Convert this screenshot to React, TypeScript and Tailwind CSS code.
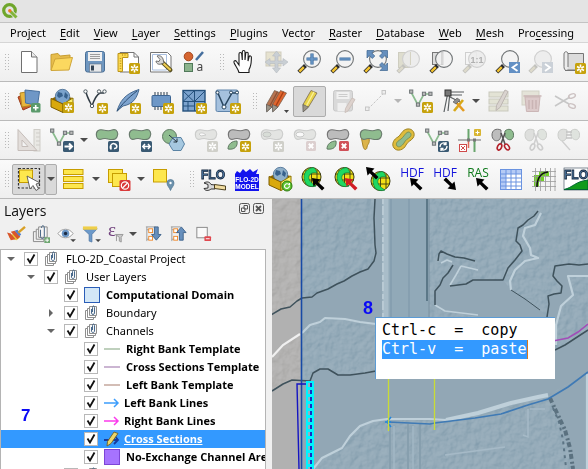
import React from "react";

type Kids = { children?: React.ReactNode };

function Svg({ children, size = 24 }: Kids & { size?: number }) {
  return (
    <svg width={size} height={size} viewBox="0 0 24 24" fill="none" className="block shrink-0 overflow-visible" aria-hidden="true">
      {children}
    </svg>
  );
}

/* ---------- shared icon parts ---------- */

function Star({ x = 13, y = 13, dim = false }: { x?: number; y?: number; dim?: boolean }) {
  return (
    <g transform={`translate(${x} ${y})`}>
      <rect width="11" height="11" rx="1.5" fill={dim ? "#cfcfc9" : "#c6a20c"} />
      <path d="M5.5 1.5v8M2 3.5l7 4M9 3.5l-7 4" stroke="#fff" strokeWidth="1.6" />
      <circle cx="5.5" cy="5.5" r="1.1" fill={dim ? "#cfcfc9" : "#c6a20c"} />
    </g>
  );
}

function Cross({ x = 13, y = 13, dim = false }: { x?: number; y?: number; dim?: boolean }) {
  return (
    <g transform={`translate(${x} ${y})`}>
      <rect width="10" height="10" rx="1.5" fill={dim ? "#dccfcf" : "#d05058"} />
      <path d="M2.8 2.8l4.4 4.4M7.2 2.8L2.8 7.2" stroke="#fff" strokeWidth="2" />
    </g>
  );
}

function NavyBadge({ children }: Kids) {
  return (
    <g transform="translate(13 13)">
      <rect width="11" height="11" rx="1.5" fill="#3a5a73" />
      <g stroke="#fff" strokeWidth="1.5" fill="none">{children}</g>
    </g>
  );
}

function Lens({ dim = false, handle = "#f4c430", children }: Kids & { dim?: boolean; handle?: string }) {
  return (
    <>
      <path d="M7.5 15.5L.8 22.2" stroke={dim ? "#c2c2be" : "#2b2b2b"} strokeWidth="4" />
      <path d="M5.8 17.2L1.4 21.6" stroke={dim ? "#dddacb" : handle} strokeWidth="2.4" />
      <circle cx="14" cy="9" r="8.4" fill={dim ? "#ececec" : "#f3f3f3"} fillOpacity=".88" stroke={dim ? "#cfcfcf" : "#707476"} strokeWidth="1.1" />
      {children}
    </>
  );
}

const BLOB = "M1.5 8C.5 3 4 1 8 2c4 1 6 1.500 9 0 5-1.500 7 3 5 7-1.500 3-5 3-9 2-3-1-4-.5-6 0-3 1-5 0-5.500-3z";

function Blob({ fill = "#8fbc8f", stroke = "#687a6c" }: { fill?: string; stroke?: string }) {
  return <path d={BLOB} fill={fill} stroke={stroke} strokeWidth="1.1" />;
}

function Vee({ line = "#333f49", node = "#fff" }: { line?: string; node?: string }) {
  return (
    <>
      <path d="M2 3l7 13 6-11h7" stroke={line} strokeWidth="1.7" />
      <g fill={node} stroke="#6f7577" strokeWidth="1">
        <rect x=".6" y="1" width="3.200" height="3.200" />
        <rect x="7.400" y="14" width="3.200" height="3.200" />
        <rect x="13.400" y="3.200" width="3.200" height="3.200" />
        <rect x="19.800" y="3.200" width="3.200" height="3.200" />
      </g>
    </>
  );
}

function Pencil({ body, dark, dx = 0 }: { body: string; dark: string; dx?: number }) {
  return (
    <g transform={`translate(${dx} 0)`}>
      <path d="M14 1.500l6 2.500-8.500 14-5 4.500-.5-7z" fill={body} stroke="#6b5a4a" strokeWidth=".7" />
      <path d="M17 2.800L9 17.500" stroke={dark} strokeWidth="1.300" />
      <path d="M6 15.500l5.500 2.500-5.500 5z" fill="#9b9488" stroke="#555" strokeWidth=".6" />
    </g>
  );
}

function Scissors({ dim = false }: { dim?: boolean }) {
  const c = dim ? "#cdcdcd" : "#b3202a";
  return (
    <>
      <path d="M10 5l4 11M14 5l-4 11" stroke={dim ? "#cfcfcf" : "#555"} strokeWidth="1.600" />
      <ellipse cx="8.500" cy="19" rx="2" ry="3.200" transform="rotate(25 8.500 19)" stroke={c} strokeWidth="1.600" />
      <ellipse cx="16" cy="19" rx="2" ry="3.200" transform="rotate(-35 16 19)" stroke={c} strokeWidth="1.600" />
    </>
  );
}

function Halves({ dim = false }: { dim?: boolean }) {
  return (
    <>
      <path d="M10 2C5 0 1 2 1 7s4 7 7 5c2-1 2-7 2-10z" fill={dim ? "#dedfdd" : "#bdbdbd"} stroke={dim ? "#cccecb" : "#6e6e6e"} />
      <path d="M14 3c3-3 8-2 8.500 3s-3 7-6 5-3-5-2.500-8z" fill={dim ? "#dfe3de" : "#8fbc8f"} stroke={dim ? "#cccecb" : "#5f7a62"} />
    </>
  );
}

function Globe({ x = 0, y = 0 }: { x?: number; y?: number }) {
  return (
    <g transform={`translate(${x} ${y})`}>
      <circle cx="10.500" cy="10" r="9.500" fill="#f2e016" stroke="#3a3a10" strokeWidth="1" />
      <path d="M5 3v14M10.500 1v18M16 3v14M1 7h19M1 13h19" stroke="#3a3a10" strokeWidth=".9" />
      <path d="M12 .5C3 2 1 10 5 17c3 3 7 3 10 2-5-3-8-6-7-10 1-3 5-4 8-3-1-3-2-5-4-5.500z" fill="#1fd862" stroke="#107a36" strokeWidth=".7" />
    </g>
  );
}

function Arrow({ fill = "#000", x = 10, y = 10, turn = 0 }: { fill?: string; x?: number; y?: number; turn?: number }) {
  return (
    <path
      transform={`translate(${x} ${y}) rotate(${turn} 6 6)`}
      d="M0 0l8.500 1.500-2.500 2.500 6.500 6-2.500 2.500-6.200-6.300-2.300 2.300z"
      fill={fill}
    />
  );
}

function OpenBox({ globeFill = "#7ba3cc" }: { globeFill?: string }) {
  return (
    <>
      <path d="M1 10l8-4 14 3-10 5z" fill="#8a6500" />
      <circle cx="12.500" cy="7.500" r="7.200" fill={globeFill} stroke="#456a8f" strokeWidth=".8" />
      <path d="M8 3l4 1 1 3-4 2-2-2zM15 3l3 3-1 4-3-2z" fill="#37618c" />
      <path d="M1 9.500l12 5.500v8.500L1 18z" fill="#d9a90d" stroke="#7c5c00" />
      <path d="M13 15l10-6v9l-10 5.500z" fill="#fbee6c" stroke="#8f7400" />
    </>
  );
}

function FloText() {
  return (
    <text
      x="11"
      y="12"
      textAnchor="middle"
      fill="#4f7ba6"
      stroke="#14253c"
      strokeWidth=".8"
      fontFamily="Liberation Sans, sans-serif"
      fontWeight="700"
      fontSize="12"
    >
      FLO
    </text>
  );
}

function Tag({ text, color, turn = 0 }: { text: string; color: string; turn?: number }) {
  return (
    <Svg>
      <text x="12" y="9.500" textAnchor="middle" fill={color} fontSize="12" fontFamily="Open Sans, sans-serif">{text}</text>
      <Arrow x={turn ? 11 : 10} y={11} turn={turn} />
    </Svg>
  );
}

/* ---------- icons ---------- */

const icons: Record<string, React.ReactNode> = {
  newDoc: <Svg><path d="M4.500 1.500h10l5.500 5.500v15.500H4.500z" fill="#fff" stroke="#707070" /><path d="M14.500 1.500V7H20" fill="#e9e9e9" stroke="#707070" /></Svg>,
  open: <Svg><path d="M1 20V4.500L8 3.500l2 2.500 10-1v4" fill="#e7bd4c" stroke="#c79d31" /><path d="M1 20.500L5 9l17.500-1.500L19 20z" fill="#fbd85f" stroke="#cfa539" /></Svg>,
  save: <Svg><rect x="2.500" y="1.500" width="19" height="20.500" rx="2" fill="#6f97c0" stroke="#4a6f96" /><rect x="5" y="2" width="14" height="9" fill="#f0f0f0" /><path d="M7 4.500h10M7 6.500h10M7 8.500h10" stroke="#888" strokeWidth=".8" /><rect x="6.500" y="14" width="12" height="8" fill="#e6e8ea" stroke="#5a6f85" strokeWidth=".6" /><rect x="8" y="15.500" width="3" height="5" fill="#345" /></Svg>,
  layout: <Svg><path d="M4 2.500h14l4.500 4.500v15H4z" fill="#fff" stroke="#757575" /><path d="M18 2.500V7h4.500" stroke="#757575" /><path d="M2 3.500h10v4H6.500v14H2z" fill="#fcd94f" stroke="#bb941a" /><path d="M4.500 8v12M6 5h5" stroke="#c09a22" strokeDasharray="1 1.500" strokeWidth="1.500" /><Star /></Svg>,
  layoutMgr: <Svg><path d="M1.500 2.500h17L22 6v16H1.500z" fill="#fff" stroke="#757575" /><path d="M3.500 4.500h14v15.500h-14z" stroke="#a9bfe0" /><path d="M13 12l8.500 8" stroke="#59501e" strokeWidth="4" strokeLinecap="round" /><path d="M14 13l7 6.500" stroke="#eccb51" strokeWidth="2.200" strokeLinecap="round" /><path d="M8 6c2-1 5 0 6 3l1 4-3 1c-3 1-5-1-5-3l3 .500 1-2z" fill="#d8d8d8" stroke="#555" strokeWidth=".8" /></Svg>,
  style: <Svg><circle cx="6.500" cy="6.500" r="4.300" fill="#d56530" stroke="#a4431a" /><path d="M14 10l7-8" stroke="#456f9e" strokeWidth="2.500" /><rect x="2.500" y="13.500" width="8" height="8" fill="#8bb38c" stroke="#50795a" /><text x="14.500" y="21" fontSize="12" fill="#444" fontFamily="Noto Sans, sans-serif">a</text></Svg>,
  hand: <Svg><path d="M7 22.500c-1-4-4-7-5-10-.5-2 1.500-2.500 2.500-1L7 15V4c0-2 2.500-2 2.700 0l.6 6V2c0-2 2.700-2 2.700 0v8l.7-6.500c.2-1.800 2.600-1.600 2.500.3L16 11l1-4c.5-1.700 2.500-1.300 2.400.5-.2 5 .1 8-2.400 12v3z" fill="#fff" stroke="#1c1c1c" strokeWidth="1.100" /></Svg>,
  panSel: <Svg><rect x="1" y="2" width="15" height="14" fill="#e6e2cf" stroke="#cfccbd" /><path d="M11.500 1l4 5h-2.500v5h5V8.500l5 3.500-5 4v-2.500h-5V18h2.500l-4 5-4-5H10v-4.500H5V16l-5-4 5-3.500V11h5V6H7.500z" fill="#c9cfd4" stroke="#b5bbc0" strokeWidth=".6" /></Svg>,
  zoomIn: <Svg><Lens><path d="M14 3.500v11M8.500 9h11" stroke="#3b6a9c" strokeWidth="3.200" /><path d="M14 4v10M9 9h10" stroke="#6c99c8" strokeWidth="1.600" /></Lens></Svg>,
  zoomOut: <Svg><Lens><path d="M8.500 9h11" stroke="#3b6a9c" strokeWidth="3" /><path d="M9 9h10" stroke="#6c99c8" strokeWidth="1.400" /></Lens></Svg>,
  zoomFull: <Svg><Lens /><g fill="#668fbd" stroke="#3b648f" strokeWidth=".7"><path d="M3 .5h7L7.800 3l3 3-2.500 2.500-3-3L3 8z" /><path d="M23.500 .5v7.500L21 5.500l-3 3L15.500 6l3-3-2-2.500z" /><path d="M23.500 20.500h-7.500l2.500-2.500-3-3 2.500-2.500 3 3 2.500-2.500z" /></g></Svg>,
  zoomSel: <Svg><rect x="1.500" y="2.500" width="11" height="15" fill="#deddce" stroke="#cecdc0" /><Lens dim /><path d="M13.500 2v13" stroke="#d5d3c3" /></Svg>,
  zoomLayer: <Svg><rect x="2.500" y="2.500" width="11" height="12" fill="#ddd" stroke="#777" /><Lens /><path d="M12 2v13" stroke="#bbb" /></Svg>,
  zoom1: <Svg><rect x="2.500" y="2.500" width="11" height="12" stroke="#cfcfcf" /><Lens dim /><text x="14" y="12.500" fontSize="9" fontWeight="700" textAnchor="middle" fill="#b0b0b0" fontFamily="Liberation Sans, sans-serif">1:1</text></Svg>,
  zoomPrev: <Svg><Lens /><rect x="13" y="12" width="11" height="11" fill="#6390c4" /><path d="M21.500 14l-5 3.500 5 3.500" stroke="#fff" strokeWidth="1.800" /></Svg>,
  zoomNext: <Svg><Lens dim /><rect x="13" y="12" width="11" height="11" fill="#cbd1d8" /><path d="M16 14l5 3.500-5 3.500" stroke="#fff" strokeWidth="1.800" /></Svg>,
  newMap: <Svg><path d="M6 3.500h15.500V20H5" fill="#dcdcdc" stroke="#767676" /><path d="M5 20.500c-2.500 0-3-2-3-4V4c0-3 4-3 4 0v13" fill="#ececec" stroke="#767676" /><path d="M3 20.500h17" stroke="#767676" /><Star /></Svg>,

  dataSource: <Svg><path d="M1 8l9-4 5 13-9 4z" fill="#cf5a2d" stroke="#9c3d18" /><path d="M3 4l12-2 2 14-12 2z" fill="#e9b63d" stroke="#b78720" /><path d="M8 1l14.500 1.500-2 14L8.500 14z" fill="#6f97c6" stroke="#47709f" /><rect x="14" y="14" width="9.500" height="9.500" rx="1.500" fill="#5a9a6b" /><path d="M18.700 16v5.500M16 18.700h5.500" stroke="#fff" strokeWidth="1.600" /></Svg>,
  geopackage: <Svg><OpenBox /><Star /></Svg>,
  shapefile: <Svg><path d="M3 3c1 5 3 8 6 14 2-6 4-11 8-13h4" stroke="#303b44" strokeWidth="1.500" /><g fill="#fff" stroke="#4d5960"><circle cx="2.500" cy="2.500" r="1.700" /><circle cx="9" cy="17" r="1.700" /><circle cx="16" cy="2.500" r="1.700" /><circle cx="21.500" cy="2.500" r="1.700" /></g><Star x={14} y={14} /></Svg>,
  feather: <Svg><path d="M1 22c3-9 7-17 22-21.500C21 8 18 15 7 17z" fill="#7ea4cf" stroke="#44688f" /><path d="M1 22.500C6 15 12 9 21 2" stroke="#2d4e72" /><Star x={14} y={14} /></Svg>,
  chip: <Svg><path d="M6 3v4M9 3v4M12 3v4M15 3v4M18 3v4M6 17v4M9 17v4M12 17v4" stroke="#4c5a68" strokeWidth="1.200" /><rect x="3" y="6.500" width="18.500" height="11" rx="1" fill="#6d97c7" stroke="#3c6491" /><Star x={14} y={14} /></Svg>,
  meshLayer: <Svg><rect x="1" y="1.500" width="22" height="20.500" fill="#7ca3ce" stroke="#24507c" strokeWidth="1.400" /><path d="M12.500 1.500V22M1 12.500h22M1 2l11 10.500M12.500 12.500L23 2M12 2L1 12.500M1 17h11.500M6 12.500V22" stroke="#24507c" strokeWidth="1" /><Star x={14} y={14} /></Svg>,
  virtual: <Svg><rect x="1" y="1" width="22" height="21.500" rx="1.500" fill="#a5c1de" stroke="#5e84ab" /><path d="M2 2l7 16L17 4h6" stroke="#27455f" strokeWidth="1.500" /><g fill="#fff" stroke="#27455f"><circle cx="2.500" cy="3.500" r="1.500" /><circle cx="9" cy="18" r="2" /><circle cx="16" cy="3.500" r="1.500" /><circle cx="22" cy="3.500" r="1.500" /></g><Star x={15} y={14} /></Svg>,
  pencils: <Svg><Pencil body="#b77552" dark="#8d5034" dx={-4.500} /><Pencil body="#e0662f" dark="#a63f15" dx={1.500} /><path d="M19 21h5l-2.500 3z" fill="#444" /></Svg>,
  pencil: <Svg><Pencil body="#e7d24a" dark="#fbf19a" dx={-1} /></Svg>,
  saveEdits: <Svg><rect x="2.500" y="1.500" width="19" height="20.500" rx="2" fill="#d9d9d9" stroke="#c8c8c8" /><rect x="5.500" y="3" width="13" height="7" fill="#f1f1f1" /><path d="M7.500 5.500h9M7.500 7.500h9" stroke="#ccc" /><rect x="6.500" y="14" width="9" height="8" fill="#efefef" /><path d="M21 9l3 1.500L17 22l-3 1.500.5-4z" fill="#ddd2cd" stroke="#ccc1bc" /></Svg>,
  digitize: <Svg><path d="M4 20L20 4" stroke="#c5c5c5" strokeDasharray="2.500 1.500" /><rect x="1.500" y="18" width="3.500" height="3.500" fill="#eee" stroke="#c5c5c5" /><rect x="18" y="1.500" width="3.500" height="3.500" fill="#eee" stroke="#c5c5c5" /></Svg>,
  addLine: <Svg><Vee line="#8abc8e" node="#bbb" /><Star x={13} y={13} /></Svg>,
  vertex: <Svg><path d="M6 3l-4 20M8 3L6 22M4 3h18M4 6h16M8 8l10 5" stroke="#5a5f61" strokeWidth="1.200" /><rect x="3" y="1" width="6" height="6" fill="#777" stroke="#333" /><path d="M12 22L21 11" stroke="#d7a818" strokeWidth="2.600" /><path d="M13 12l9 10" stroke="#e49b20" strokeWidth="2.600" /><path d="M11 13l4-4 3 2-4 4z" fill="#8c8c8c" stroke="#555" strokeWidth=".6" /></Svg>,
  multiEdit: <Svg><g fill="#e3e3d5" stroke="#c9c9bd"><rect x="2" y="3" width="19" height="5" /><rect x="2" y="10" width="19" height="5" /><rect x="2" y="17" width="19" height="5" /></g><path d="M18 1l3 1.500-8 16-4 3 .500-5z" fill="#d9d3cf" stroke="#bdb6b2" /></Svg>,
  del: <Svg><rect x="2" y="2" width="17" height="14" fill="#e4e3d8" stroke="#d2d1c5" /><path d="M5 8h15l-1.500 14.500h-12z" fill="#dccaca" stroke="#cbb6b6" /><path d="M3.500 7h18M9 11v9M12.500 11v9M16 11v9" stroke="#c9b4b4" strokeWidth="1.500" /></Svg>,
  cut: <Svg><path d="M2 7l14 8M2 17L17 8" stroke="#c7c7c7" strokeWidth="1.600" /><ellipse cx="19" cy="7" rx="3.500" ry="2" transform="rotate(-20 19 7)" stroke="#ccc2c2" strokeWidth="1.400" /><ellipse cx="19" cy="17" rx="3.500" ry="2" transform="rotate(20 19 17)" stroke="#ccc2c2" strokeWidth="1.400" /></Svg>,

  setsquare: <Svg><rect x="17" y="1.500" width="6" height="21.500" fill="#e9e8e4" stroke="#cfcdc8" /><path d="M19 5h4M19 9h4M19 13h4M19 17h4" stroke="#cfcdc8" /><path d="M1 1.500v21h19zM5 12v6.500h6z" fill="#e3dedb" fillRule="evenodd" stroke="#c5bdb9" /></Svg>,
  moveFeature: <Svg><Vee line="#8abc8e" node="#bbb" /><NavyBadge><path d="M1.500 5.500H9M6 2.500l3 3-3 3" strokeWidth="2" /></NavyBadge></Svg>,
  rotate: <Svg><Blob /><NavyBadge><path d="M3 8.500C1 5 4 1.500 7 3s2 5-1 4.500M3 8.500V5" /></NavyBadge></Svg>,
  scale: <Svg><Blob /><NavyBadge><path d="M2 5.500h7M4 3L1.800 5.500 4 8M7 3l2.200 2.500L7 8" /></NavyBadge></Svg>,
  simplify: <Svg><circle cx="8.500" cy="8.500" r="7" fill="#8fbc8f" stroke="#5f7a62" /><path d="M12 9.500h8l3.500 6.500-3.500 6.500h-8L8 16z" fill="#a6c8e0" stroke="#5a83a4" /><path d="M8 7l8 7M16 10.500V14h-3.500" stroke="#24343f" /></Svg>,
  ringDim: <Svg><Blob fill="#e3e4e2" stroke="#cbcccb" /><path d="M5 6c2-2 5-1 7 1l-5 1z" fill="#fafafa" stroke="#cbcccb" /><Star dim /></Svg>,
  addPart: <Svg><Blob fill="#bcbcbc" stroke="#757575" /><path d="M1 21c0-5 4-8 9-8 1 6-3 9-9 8z" fill="#8fbc8f" stroke="#5f7a62" /><Star /></Svg>,
  fillRing: <Svg><Blob fill="#e3e4e2" stroke="#cbcccb" /><ellipse cx="7" cy="6.500" rx="4" ry="2.500" fill="#d8ddd7" stroke="#c3c5c3" /><Star dim /></Svg>,
  delRing: <Svg><Blob fill="#e3e4e2" stroke="#cbcccb" /><ellipse cx="7" cy="6.500" rx="4" ry="2.500" fill="#fafafa" stroke="#c8c9c8" /><Cross dim /></Svg>,
  delPart: <Svg><Blob fill="#bcbcbc" stroke="#757575" /><path d="M1 21c0-5 4-8 9-8 1 6-3 9-9 8z" fill="#8fbc8f" stroke="#5f7a62" /><Cross /></Svg>,
  reshape: <Svg><path d="M2 8l2 10c1 5 4 4 4 1 1-4 3-3 2-9z" fill="#dcb44a" stroke="#a88427" /><Blob /></Svg>,
  offset: <Svg><path d="M2 20c-3-4 0-9 4-11 3-2 4-7 9-8 6-1 9 5 6 9-2 3-5 3-7 7-2 5-9 7-12 3z" fill="#dfbc3c" stroke="#9f8322" /><path d="M5 18c-2-3 1-5 4-7s4-6 7-7c3 0 4 3 2 5s-5 3-6 6c-2 3-5 5-7 3z" fill="#8fbc8f" stroke="#7d9457" /></Svg>,
  reverse: <Svg><Vee line="#8abc8e" node="#bbb" /><NavyBadge><path d="M2 6c0-4 4-5 6-3M8 1v2.500H5.500M9 5c0 4-4 5-6 3M3 10V7.500h2.500" strokeWidth="1.300" /></NavyBadge></Svg>,
  trim: <Svg><path d="M0 12h23" stroke="#9a9a9a" strokeWidth="1.500" /><path d="M10.500 1v11M16.500 12v12" stroke="#69a56d" strokeWidth="2" /><path d="M10.500 12v8" stroke="#df6a58" strokeWidth="1.500" /><rect x="9" y="10.500" width="3" height="3" fill="#777" /><rect x="15" y="10.500" width="3" height="3" fill="#777" /><rect x="16" y="1" width="7" height="7" rx="1" fill="#d8b532" /><path d="M19.500 2.500v4M17.500 4.500h4" stroke="#fff" /><rect x="1.500" y="16.500" width="7" height="7" fill="#fff" stroke="#d04a4a" /><path d="M3 18l4 4M7 18l-4 4" stroke="#d04a4a" /></Svg>,
  split: <Svg><Halves /><Scissors /></Svg>,
  splitDim: <Svg><Halves dim /><Scissors dim /></Svg>,
  mergeDim: <Svg><Halves dim /><path d="M9 4h6M9 7h6M9 10h6" stroke="#c4c4c4" strokeWidth="1.500" /><path d="M5 13l8 9" stroke="#cfcfcf" strokeWidth="1.300" /></Svg>,

  select: <Svg><path d="M1.500 1.500h21v19.500h-21z" stroke="#333" strokeDasharray="2.500 1.500" strokeWidth="1.200" /><rect x="2.500" y="3" width="13" height="12.500" fill="#fde74d" stroke="#c79d00" /><path d="M10 9l3 13 3-3.500 3 5 2.500-1.500-2.500-5 4-1z" fill="#fff" stroke="#555" strokeWidth=".9" /></Svg>,
  selectForm: <Svg><g fill="#fde74d" stroke="#c79d00"><rect x="1.500" y="2.500" width="19.500" height="5" /><rect x="1.500" y="9.500" width="19.500" height="5" /><rect x="1.500" y="16.500" width="19.500" height="5" /></g></Svg>,
  deselect: <Svg><g fill="#fde74d" stroke="#c79d00"><rect x="1.500" y="2.500" width="14" height="13" /><rect x="5.500" y="6.500" width="14" height="13" /></g><rect x="12.500" y="13" width="11" height="11" rx="1.500" fill="#d93a3a" /><circle cx="18" cy="18.500" r="3.700" stroke="#fff" strokeWidth="1.200" /><path d="M15.500 21l5-5" stroke="#fff" strokeWidth="1.200" /></Svg>,
  selectLoc: <Svg><rect x="1.500" y="2.500" width="13" height="12.500" fill="#fde74d" stroke="#c79d00" /><path d="M18.500 23.500c-1-3-3.500-4.500-3.500-7.500a3.500 3.500 0 017 0c0 3-2.500 4.500-3.500 7.500z" fill="#6c92ad" stroke="#4d7491" strokeWidth=".7" /><circle cx="18.500" cy="16" r="1.200" fill="#fff" /></Svg>,
  floTools: <Svg><FloText /><path d="M2 16c3-2 6-1 7 1.500l4 .5v4l-4 0c-2 2-6 2-7-.5l4-.5v-3.500z" fill="#d8d8d8" stroke="#222" strokeWidth=".9" /><path d="M12.500 17.500l11 1.500v4l-11-1.500z" fill="#f0dca0" stroke="#3b3010" strokeWidth=".9" /></Svg>,
  floModel: <Svg><path d="M0 7l2-3 3 2 3-4 3 3 4-3 3 3 5-3-2 5 3 0v17H0z" fill="#1212ee" /><g fontFamily="Liberation Sans, sans-serif" fontWeight="700" fill="#fff" fontSize="6.500" textAnchor="middle"><text x="12" y="15">FLO-2D</text><text x="12" y="22">MODEL</text></g></Svg>,
  floBox: <Svg><OpenBox globeFill="#8fb0c9" /><circle cx="19" cy="19" r="5" fill="#5fc331" stroke="#2c7a10" /><path d="M16.500 20c0-4 4-4 5-1.500M21.500 18v-2M21.500 19c-.5 3-4 3-5 1" stroke="#fff" strokeWidth="1.100" /></Svg>,
  globeBlack: <Svg><Globe /><Arrow x={11} y={11} /></Svg>,
  globeRed: <Svg><Globe /><Arrow x={11} y={11} fill="#d01c24" /></Svg>,
  globeOut: <Svg><Globe x={3} y={4} /><Arrow x={-1} y={0} /></Svg>,
  hdfIn: <Tag text="HDF" color="#1414dc" />,
  hdfOut: <Tag text="HDF" color="#1414dc" turn={180} />,
  ras: <Tag text="RAS" color="#0f7a1c" />,
  grid: <Svg><rect x="1.500" y="2.500" width="21" height="20" fill="#fff" stroke="#6a93e0" /><rect x="2" y="3" width="20" height="4" fill="#b5cbf5" /><rect x="2" y="3" width="5" height="19" fill="#b5cbf5" /><path d="M7 2v20M12 2v20M17 2v20M2 7h20M2 11h20M2 15h20M2 19h20" stroke="#6a93e0" /></Svg>,
  curve: <Svg><path d="M2 8h5V4h10v5h-5v5H7v6H2z" fill="#72cf28" /><path d="M3.500 1v23M8.500 1v23M13.500 1v23M18.500 1v23M23 1v23M0 4.500h24M0 9.500h24M0 14.500h24M0 19.500h24" stroke="#9a9a9a" strokeWidth=".8" /><path d="M5 20C5 11 8 6 16 5" stroke="#111" strokeWidth="1.600" /></Svg>,
  floHill: <Svg><rect x="-1" y="1" width="24" height="22" fill="#fff" stroke="#345" strokeWidth=".6" /><FloText /><path d="M-1 22.500c9-2 11-8 24-9.500v9.500z" fill="#109a1c" stroke="#063" /></Svg>,
};

/* ---------- toolbars ---------- */

type Item =
  | { kind: "icon"; id: string; label: string; on?: boolean }
  | { kind: "drop"; label: string; dim?: boolean; on?: boolean }
  | { kind: "grip" };

const i = (id: string, label: string, on = false): Item => ({ kind: "icon", id, label, on });
const d = (label: string, dim = false, on = false): Item => ({ kind: "drop", label, dim, on });
const grip: Item = { kind: "grip" };

const toolbars: Item[][] = [
  [
    i("newDoc", "New Project"), i("open", "Open Project"), i("save", "Save Project"), i("layout", "New Print Layout"),
    i("layoutMgr", "Layout Manager"), i("style", "Style Manager"), grip, i("hand", "Pan Map"), i("panSel", "Pan to Selection"),
    i("zoomIn", "Zoom In"), i("zoomOut", "Zoom Out"), i("zoomFull", "Zoom Full"), i("zoomSel", "Zoom to Selection"),
    i("zoomLayer", "Zoom to Layer"), i("zoom1", "Zoom to Native Resolution"), i("zoomPrev", "Zoom Last"),
    i("zoomNext", "Zoom Next"), i("newMap", "New Map View"),
  ],
  [
    i("dataSource", "Data Source Manager"), i("geopackage", "New GeoPackage Layer"), i("shapefile", "New Shapefile Layer"),
    i("feather", "New SpatiaLite Layer"), i("chip", "New Scratch Layer"), i("meshLayer", "New Mesh Layer"),
    i("virtual", "New Virtual Layer"), grip, i("pencils", "Current Edits"), i("pencil", "Toggle Editing", true),
    i("saveEdits", "Save Layer Edits"), i("digitize", "Digitize with Segment"), d("Digitize options", true),
    i("addLine", "Add Line Feature"), i("vertex", "Vertex Tool"), d("Vertex options"), i("multiEdit", "Modify Attributes"),
    i("del", "Delete Selected"), i("cut", "Cut Features"),
  ],
  [
    i("setsquare", "Advanced Digitizing"), i("moveFeature", "Move Feature"), d("Move options"), i("rotate", "Rotate Feature"),
    i("scale", "Scale Feature"), i("simplify", "Simplify Feature"), i("ringDim", "Add Ring"), i("addPart", "Add Part"),
    i("fillRing", "Fill Ring"), i("delRing", "Delete Ring"), i("delPart", "Delete Part"), i("reshape", "Reshape Features"),
    i("offset", "Offset Curve"), i("reverse", "Reverse Line"), i("trim", "Trim or Extend"), i("split", "Split Features"),
    i("splitDim", "Split Parts"), i("mergeDim", "Merge Features"),
  ],
  [
    i("select", "Select Features", true), d("Select options", false, true), i("selectForm", "Select by Value"), d("Value options"),
    i("deselect", "Deselect Features"), d("Deselect options"), i("selectLoc", "Select by Location"), grip,
    i("floTools", "FLO-2D Settings"), i("floModel", "Run FLO-2D Model"), i("floBox", "FLO-2D GeoPackage"),
    i("globeBlack", "Import GDS"), i("globeRed", "Import Components"), i("globeOut", "Export GDS"), i("hdfIn", "Import HDF5"),
    i("hdfOut", "Export HDF5"), i("ras", "Import RAS"), i("grid", "Grid Info"), i("curve", "Rating Curve"), i("floHill", "FLO-2D Profile"),
  ],
];

function Dots() {
  return (
    <svg width="5" height="17" aria-hidden="true">
      {[0, 3, 6, 9, 12, 15].map((y) => (
        <g key={y} fill="#b9b9b9">
          <rect x="0" y={y} width="1" height="1" />
          <rect x="3" y={y} width="1" height="1" />
        </g>
      ))}
    </svg>
  );
}

function Toolbar({ items }: { items: Item[] }) {
  return (
    <div role="toolbar" className="flex h-[39px] items-center overflow-hidden border-b border-[#bababa] bg-linear-to-b from-[#fafafa] to-[#efefef]">
      <div className="flex w-3 shrink-0 justify-end pr-[2px]"><Dots /></div>
      {items.map((it, n) => {
        if (it.kind === "grip") return <div key={n} className="flex w-[17px] shrink-0 justify-end pr-[2px]"><Dots /></div>;
        const on = "rounded-xs border border-[#adadad] bg-[#d9d9d9]";
        if (it.kind === "drop")
          return (
            <button key={n} type="button" aria-label={it.label} className={`flex h-[31px] w-3 shrink-0 items-center justify-center ${it.on ? on : ""}`}>
              <svg width="8" height="4" viewBox="0 0 8 4" className="shrink-0"><path d="M0 0h8L4 4z" fill={it.dim ? "#b5b5b5" : "#4c4c4c"} /></svg>
            </button>
          );
        return (
          <button key={n} type="button" aria-label={it.label} title={it.label} className={`flex h-[31px] w-[33px] shrink-0 items-center justify-center ${it.on ? on : ""}`}>
            {icons[it.id]}
          </button>
        );
      })}
    </div>
  );
}

/* ---------- menu ---------- */

const menus: [string, string, string][] = [
  ["Pro", "j", "ect"], ["", "E", "dit"], ["", "V", "iew"], ["", "L", "ayer"], ["", "S", "ettings"], ["", "P", "lugins"],
  ["Vect", "o", "r"], ["", "R", "aster"], ["", "D", "atabase"], ["", "W", "eb"], ["", "M", "esh"], ["Pro", "c", "essing"],
];

/* ---------- layer tree ---------- */

type Sym = "group" | "domain" | "purple" | "pencil" | "line" | "arrow";
type Layer = { name: string; depth: number; sym: Sym; color?: string; open?: boolean; bold?: boolean; active?: boolean };

const layers: Layer[] = [
  { name: "FLO-2D_Coastal Project", depth: 0, sym: "group", open: true },
  { name: "User Layers", depth: 1, sym: "group", open: true },
  { name: "Computational Domain", depth: 2, sym: "domain", bold: true },
  { name: "Boundary", depth: 2, sym: "group", open: false },
  { name: "Channels", depth: 2, sym: "group", open: true },
  { name: "Right Bank Template", depth: 3, sym: "line", color: "#bfd0bd", bold: true },
  { name: "Cross Sections Template", depth: 3, sym: "line", color: "#cbb5d2", bold: true },
  { name: "Left Bank Template", depth: 3, sym: "line", color: "#d3bdb5", bold: true },
  { name: "Left Bank Lines", depth: 3, sym: "arrow", color: "#3d9dfb", bold: true },
  { name: "Right Bank Lines", depth: 3, sym: "arrow", color: "#fb3bec", bold: true },
  { name: "Cross Sections", depth: 3, sym: "pencil", bold: true, active: true },
  { name: "No-Exchange Channel Are", depth: 3, sym: "purple", bold: true },
  { name: "", depth: 2, sym: "group", open: false },
];

const indent = ["pl-[3px]", "pl-[23px]", "pl-[43px]", "pl-[63px]"];

function Symbol({ sym, color }: { sym: Sym; color?: string }) {
  if (sym === "domain") return <span className="block size-4 border border-[#2a5db8] bg-[#d3e7f7]" />;
  if (sym === "purple") return <span className="block size-4 border border-[#7d45d6] bg-[#a673ff]" />;
  if (sym === "line") return <svg width="16" height="16"><path d="M0 8h16" stroke={color} strokeWidth="2" /></svg>;
  if (sym === "arrow") return <svg width="16" height="16" fill="none"><path d="M0 8h13M10 4l4 4-4 4" stroke={color} strokeWidth="1.500" /></svg>;
  if (sym === "pencil")
    return (
      <svg width="16" height="16" fill="none"><path d="M0 9h13M10 4l4 5-4 4" stroke="#173a9c" strokeWidth="1.800" /><path d="M10 1l4 1.500-7 10-4 2.500.5-4.500z" fill="#ecd66a" stroke="#6f6126" strokeWidth=".9" /></svg>
    );
  return (
    <svg width="16" height="16" fill="none" stroke="#8e8e8e">
      <path d="M3 5.500H1.500v9h8V13" /><path d="M5 3.500H3.500v9h8V11" /><path d="M5.500 1.500h7v9h-7z" fill="#f7f7f7" />
      <path d="M7.500 4v4c0 2 3 2 3 0V2.500c0-2-2-2-2 0V7" stroke="#4a6a8c" />
    </svg>
  );
}

function LayerRow({ layer, id }: { layer: Layer; id: string }) {
  return (
    <li className={`flex h-[18px] items-center whitespace-nowrap ${indent[layer.depth]} ${layer.active ? "bg-[#3399ff] text-white" : "text-black"}`}>
      <span className="flex w-5 shrink-0 items-center pl-[3px]">
        {layer.open !== undefined && (
          <svg width="9" height="8"><path d={layer.open ? "M0 2h8L4 6z" : "M2 0v8l4-4z"} fill="#666" /></svg>
        )}
      </span>
      <span className="relative mr-[6px] block size-[14px] shrink-0">
        <input id={id} type="checkbox" defaultChecked aria-label={layer.name || "Layer group"} className="block size-[14px] appearance-none border border-[#b8b8b8] bg-white" />
        <svg width="14" height="14" fill="none" className="pointer-events-none absolute inset-0"><path d="M3.500 6.500l2.500 4 4.500-8" stroke="#111" strokeWidth="1.800" /></svg>
      </span>
      <span className="mr-[6px] block w-4 shrink-0"><Symbol sym={layer.sym} color={layer.color} /></span>
      <label htmlFor={id} className={`${layer.bold ? "font-['Open_Sans'] font-bold" : "font-['Noto_Sans']"} ${layer.sym === "arrow" || layer.active ? "-ml-[2px]" : ""} ${layer.active ? "underline" : ""}`}>{layer.name}</label>
    </li>
  );
}

const panelTools: { label: string; art: React.ReactNode; wide?: boolean }[] = [
  { label: "Layer Styling", art: <><path d="M2 13l8 3 4-3-5-6z" fill="#ecc93a" /><path d="M0 8l4 1 5 6-5 1z" fill="#d9562c" /><path d="M4 7l4-1 6 6-3 3z" fill="#d9562c" /><path d="M8 6l3-1 4 5-2 2z" fill="#5580c8" /><path d="M12 8l7-6" stroke="#d9a026" strokeWidth="2.500" /></> },
  { label: "Add Group", art: <><g stroke="#888"><path d="M4 7H1.500v10.500h11V15" /><path d="M6.500 4.500h-2V15h11v-2" /><path d="M7 2h9v11H7z" fill="#f5f5f5" /></g><path d="M9 5v7c0 3 4 3 4 0V3c0-3-3-3-3 0" stroke="#3f5f80" /><rect x="13" y="13" width="6" height="6" fill="#70a873" /><path d="M16 14v4M14 16h4" stroke="#fff" /></> },
  { label: "Map Themes", art: <><path d="M1 9c4-6 12-6 16 0-4 6-12 6-16 0z" fill="#fff" stroke="#999" /><circle cx="9" cy="9" r="4" fill="#6a95c5" /><circle cx="9" cy="9" r="1.800" fill="#1c2c44" /><path d="M14 15h6l-3 3z" fill="#444" /></> },
  { label: "Filter Legend", art: <><path d="M1 4h15l-5.500 6v8l-3 -1v-7z" fill="#6c99c9" stroke="#47709f" strokeWidth=".7" /><rect x="1" y="1.500" width="15" height="3.500" fill="#efcf4a" /><path d="M14 15h6l-3 3z" fill="#444" /></> },
  { label: "Filter by Expression", wide: true, art: <><text x="1" y="12" fontSize="20" fill="#70407c" fontFamily="Liberation Serif, serif">ε</text><path d="M9 10h8l-2 3v5l-2-1v-4zM10 10v7" fill="#c8c8c8" stroke="#999" /></> },
  { label: "Expand All", art: <><path d="M3 2v15M3 5h4M3 15h4M2 2h10" stroke="#999" /><rect x="5" y="4" width="4" height="4" fill="#fff" stroke="#ef8b2e" /><rect x="5" y="12" width="4" height="4" fill="#fff" stroke="#ef8b2e" /><path d="M11 2h4v8h3l-5 6-5-6h3z" fill="#668fbd" stroke="#41648c" /></> },
  { label: "Collapse All", art: <><path d="M3 2v15M3 5h4M3 15h4M2 2h10" stroke="#999" /><rect x="5" y="4" width="4" height="4" fill="#fff" stroke="#ef8b2e" /><rect x="5" y="12" width="4" height="4" fill="#fff" stroke="#ef8b2e" /><path d="M11 16h4V8h3l-5-6-5 6h3z" fill="#668fbd" stroke="#41648c" /></> },
  { label: "Remove Layer", art: <><rect x="3" y="2.500" width="11" height="11" fill="#fafafa" stroke="#888" /><rect x="11" y="12" width="7" height="5" rx="1" fill="#e0484f" /><path d="M12.500 14.500h4" stroke="#fff" /></> },
];

function LayersPanel() {
  return (
    <section aria-label="Layers" className="relative flex w-[266px] shrink-0 flex-col">
      <header className="flex h-[23px] items-center pl-1 pr-[2px]">
        <h2 className="flex-1 font-['Open_Sans'] text-[14px] leading-5 text-[#111]">Layers</h2>
        <div className="mb-1 flex gap-[3px]">
          <button type="button" aria-label="Float panel"><svg width="11" height="11" fill="none" stroke="#555"><rect x=".5" y=".5" width="10" height="10" rx="2" /><path d="M5 2.500h3.500V6H5zM2.500 5H6v3.500H2.500z" fill="#f0f0f0" /></svg></button>
          <button type="button" aria-label="Close panel"><svg width="11" height="11" fill="none" stroke="#555"><rect x=".5" y=".5" width="10" height="10" rx="2" /><path d="M3 3l5 5M8 3L3 8" strokeWidth="1.800" /></svg></button>
        </div>
      </header>
      <div className="flex h-[27px] items-center gap-[7px] pb-[4px] pl-[7px]">
        {panelTools.map((t) => (
          <button key={t.label} type="button" aria-label={t.label} className={`flex shrink-0 items-center ${t.wide ? "gap-[4px]" : ""}`}>
            <svg width="18" height="18" viewBox="0 0 19 19" fill="none" className="shrink-0 overflow-visible">{t.art}</svg>
            {t.wide && <svg width="8" height="4"><path d="M0 0h8L4 4z" fill="#4c4c4c" /></svg>}
          </button>
        ))}
      </div>
      <ul className="flex-1 overflow-hidden border border-b-0 border-[#b4b4b4] bg-white text-[11px] leading-[18px]">
        {layers.map((l, n) => <LayerRow key={n} layer={l} id={`layer-${n}`} />)}
      </ul>
      <span className="absolute left-[21px] top-[207px] font-['Liberation_Sans'] text-[17px] font-bold leading-5 text-[#0a0af5]">7</span>
    </section>
  );
}

/* ---------- map ---------- */

function Relief() {
  return (
    <svg className="absolute inset-0 h-full w-full" viewBox="272 199 316 270" preserveAspectRatio="xMinYMin slice" fill="none" aria-label="Shaded relief map">
      <defs>
        <filter id="grain" x="0" y="0" width="100%" height="100%" colorInterpolationFilters="sRGB">
          <feTurbulence type="fractalNoise" baseFrequency="0.13" numOctaves="3" seed="4" />
          <feDiffuseLighting surfaceScale="2.200" lightingColor="#9c9c9c"><feDistantLight azimuth="225" elevation="55" /></feDiffuseLighting>
        </filter>
        <pattern id="cells" x="306" y="381" width="8" height="7" patternUnits="userSpaceOnUse">
          <rect width="8" height="7" fill="#00f4ff" /><rect x="2" y="2" width="4" height="4" fill="#8fb3c6" /><rect x="4" y="2" width="2" height="4" fill="#1c2cc0" />
        </pattern>
        <filter id="soft"><feGaussianBlur stdDeviation="0.5" /></filter>
      </defs>
      <rect x="272" y="199" width="316" height="270" fill="#95abb9" />
      <rect x="272" y="199" width="30" height="270" fill="#b4b3b2" />
      <rect x="272" y="199" width="316" height="270" filter="url(#grain)" opacity=".28" style={{ mixBlendMode: "overlay" }} />
      {/* open water */}
      <g fill="#92a7b5">
        <path d="M302 298L317 293 337 285 352 276 368 269 376 258 375 199H382V324L345 319 325 318 302 333z" />
        <path d="M302 380L310 381 313 373 320 369 328 369 338 375 365 373 376 371 390 366 555 350 588 330V372L548 395 478 412 446 420 387 419 373 421 360 426 350 436 342 448 322 458 313 469H302z" />
        <path d="M453 265L443 278 435 291 435 305 445 311 478 317H547L540 310 511 290 503 280 473 281 450 287 461 266z" />
        <path d="M588 265L555 266 553 276 562 286 561 293 548 296V350L556 325 561 306 573 295 568 276H588z" />
        <path d="M548 396L588 372V469H573L565 430z" />
      </g>
      <g fill="#b1b1b1">
        <path d="M272 315L290 305 301 299V333L283 345 272 356z" />
        <path d="M272 391L283 384 292 380 301 380V469H272z" />
      </g>
      {/* road */}
      <path d="M382 199h47v120h-47z" fill="#91a9b8" />
      <g filter="url(#soft)">
        <path d="M385.500 199v120" stroke="#a9bdc9" strokeWidth="6" />
        <path d="M383 199v120" stroke="#b9cad4" strokeWidth="2" strokeDasharray="5 2 9 3" />
        <path d="M391 199v120M409 199v120" stroke="#839dae" strokeWidth="1.500" />
        <path d="M427 199v102" stroke="#5b7888" strokeWidth="2" /><path d="M429 199v118" stroke="#7890a0" />
        <path d="M390 424v45M408 424v45M420 424v45" stroke="#879fae" strokeWidth="2" />
        <path d="M394 426v43M413 426v43" stroke="#a3b8c5" strokeWidth="1.500" />
        <path d="M528 409v28l-5 -2M530 409h15M445 455l60-8" stroke="#a6bac7" strokeWidth="1.500" />
      </g>
      {/* lit edges */}
      <g stroke="#bfd0da" strokeWidth="2.200" strokeLinejoin="round" filter="url(#soft)">
        <path d="M302 333l8-8 10-3 5-4 20 1 15 3 16 2" />
        <path d="M313 469l9-11 20-10 8-12 10-10 13-5 14-2h43l16 1" />
        <path d="M446 420l32-7 33-10 27-6 10-2" strokeWidth="4" />
        <path d="M541 213l-6 12-10 3-2 8 7 12 1 7 7 3-13 3-10 9-5 11 1 9" />
        <path d="M461 266l-5 9-6 10M461 266l17 4M441 263l6-3 5 2" strokeWidth="1.600" />
        <path d="M435 305l10 6 33 4" strokeWidth="1.600" />
        <path d="M588 276h-20l5 19-12 11-5 19v20" />
        <path d="M587 374v95" />
      </g>
      <path d="M272 357l11-12 17-11" stroke="#f0f0f0" strokeWidth="2.200" filter="url(#soft)" />
      {/* shaded edges */}
      <g stroke="#3f525c" strokeWidth="1.500" strokeLinejoin="round">
        <path d="M375 199l-1 19 1 27 1 8-2 8-6 8-8 3-8 4-8 5-7 3-9 5-11 4-5 4-10 1-5 3-7 6-9 2-10 6" />
        <path d="M272 391l11-7 9-4 18 1 3-8 7-4h8l10 6h12l15-2 11-2" />
        <path d="M538 211l-4 5-6 4-5 5-5 3-2 13 4 4 2 6-7 9-7 8-5 12h-30l-7 4-16 2" />
        <path d="M438 261l1-7 2-3 6 3 8 3 9 1 11 3M453 265l-5 8-5 5-3 7-5 6v14" />
        <path d="M588 264l-9 1-10-1-14 2-2 10 4 5 5 5-1 7-7 1-6 2 1 8-2 13" />
        <path d="M511 290l14 9 15 11" strokeWidth="1" />
        <path d="M555 350l10-5 23-15" />
      </g>
      <path d="M550 398l6 13 9 19 5 18 3 21" stroke="#485f6e" strokeWidth="4" strokeDasharray="5 3 2 2" opacity=".75" filter="url(#soft)" />
      <path d="M553 408l6 14 4 18 3 28" stroke="#5c7484" strokeWidth="2" strokeDasharray="3 4" />
      {/* vector layers */}
      <path d="M301.500 199v270" stroke="#174aa6" strokeWidth="1.600" />
      <path d="M306 384h-9l2 85" stroke="#1515c2" strokeWidth="1.400" />
      <rect x="306" y="381" width="8" height="88" fill="url(#cells)" />
      <path d="M388 422l42 2 5-1 40-5 26-4 27-9 20-6 20-12 20-15" stroke="#3f7ab5" strokeWidth="1.700" />
      <path d="M391 417l-4 5 4 5M385 422h6" stroke="#1e85df" strokeWidth="1.500" />
      <path d="M553 341l15-3 10-6 10-8" stroke="#a24db8" strokeWidth="1.600" />
      <path d="M388.500 379v52M434.500 379v51" stroke="#c9dc35" strokeWidth="1.300" />
    </svg>
  );
}

function MapCanvas() {
  return (
    <main className="relative ml-[6px] min-w-0 flex-1 overflow-hidden">
      <Relief />
      <span className="absolute left-[91px] top-[99px] font-['Liberation_Sans'] text-[18px] font-bold leading-5 text-[#0a0af5]">8</span>
      <div className="absolute left-[103px] top-[118px] h-[62px] w-[180px] border-l border-t border-[#5b9bd5] bg-white pl-[6px] pt-[3px] font-['DejaVu_Sans_Mono'] text-[15px] leading-[19px] text-black">
        <p className="whitespace-pre">Ctrl-c  =  copy</p>
        <p className="whitespace-pre"><mark className="inline-block border-r border-[#d9781c] bg-[#3399ff] text-white">Ctrl-v  =  paste</mark></p>
      </div>
    </main>
  );
}

export default function App() {
  return (
    <div className="flex h-screen flex-col overflow-hidden bg-[#f0f0f0]">
      <div className="flex h-[23px] shrink-0 items-start border-b border-[#c3c3c3] bg-[#e4e4e4] pl-[2px] pt-[3px]">
        <svg width="16" height="16" viewBox="0 0 16 16" fill="none" aria-label="QGIS">
          <circle cx="7.500" cy="7.500" r="5.800" stroke="#6fa62b" strokeWidth="3.200" />
          <path d="M8 8l6.500 6.500" stroke="#e4e4e4" strokeWidth="4.500" />
          <path d="M8.500 8.500l6 6" stroke="#83b53a" strokeWidth="3" />
          <circle cx="7.800" cy="7.800" r="1.700" fill="#ee7a1d" />
        </svg>
      </div>
      <nav className="flex h-5 shrink-0 items-center gap-[14px] overflow-hidden border-b border-[#d6d6d6] pl-[10px] font-['Noto_Sans'] text-[11px] leading-4 text-black">
        {menus.map(([a, u, b]) => (
          <button key={a + u + b} type="button" className="shrink-0">{a}<span className="underline underline-offset-2">{u}</span>{b}</button>
        ))}
      </nav>
      <div className="shrink-0">
        {toolbars.map((t, n) => <Toolbar key={n} items={t} />)}
      </div>
      <div className="flex min-h-0 flex-1">
        <LayersPanel />
        <MapCanvas />
      </div>
    </div>
  );
}
